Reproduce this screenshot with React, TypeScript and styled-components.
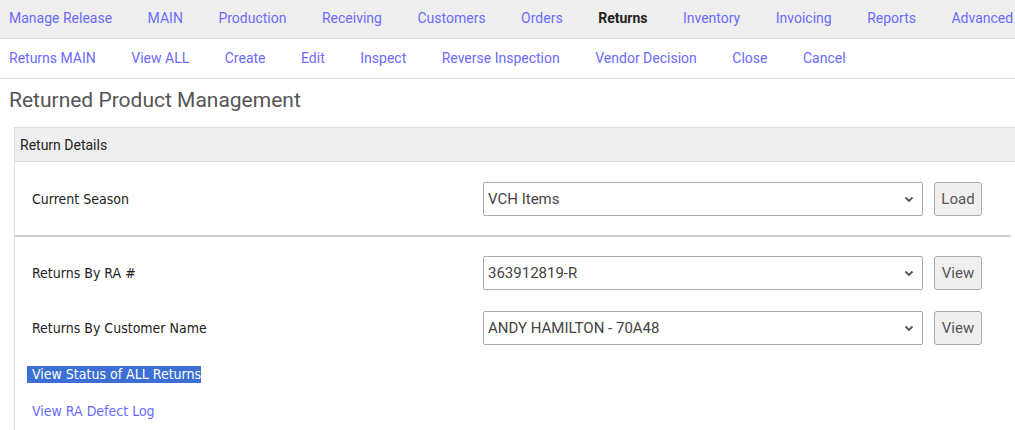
import React from "react";
import styled, { createGlobalStyle } from "styled-components";

const Global = createGlobalStyle`
  html, body { margin: 0; padding: 0; background: #fff; }
  body { font-family: Roboto, "Liberation Sans", sans-serif; overflow: hidden; }
`;

const Page = styled.div`
  width: 1015px;
  height: 430px;
  overflow: hidden;
`;

const NavBar = styled.nav<{ $bg: string; $height: number; $lift: number }>`
  display: flex;
  align-items: center;
  gap: 35.5px;
  height: ${(p) => p.$height}px;
  box-sizing: border-box;
  padding-left: 9px;
  padding-bottom: ${(p) => p.$lift}px;
  background: ${(p) => p.$bg};
  border-bottom: 1px solid #dcdcdc;
  white-space: nowrap;
  overflow: hidden;
`;

const NavLink = styled.a<{ $active?: boolean }>`
  font-size: 14px;
  color: ${(p) => (p.$active ? "#222" : "#6b6bff")};
  font-weight: ${(p) => (p.$active ? 700 : 400)};
  text-decoration: none;
  flex: none;
`;

const Title = styled.h1`
  margin: 0;
  padding: 8px 9px 0;
  height: 40px;
  font-size: 21px;
  font-weight: 400;
  color: #555;
  line-height: 26px;
`;

const Panel = styled.section`
  margin-left: 14px;
  border: 1px solid #dcdcdc;
  border-right: none;
`;

const PanelHeader = styled.div`
  height: 33px;
  line-height: 35px;
  padding-left: 5px;
  background: #efefef;
  border-bottom: 1px solid #dcdcdc;
  font-size: 14px;
  color: #222;
`;

const PanelBody = styled.div`
  padding: 20px 0 40px 17px;
`;

const FormRow = styled.div`
  display: grid;
  grid-template-columns: 440px 440px 48px;
  column-gap: 11px;
  align-items: center;
  height: 34px;
  margin-bottom: 21px;
`;

const Label = styled.span`
  font-family: "DejaVu Sans Condensed", "DejaVu Sans", Tahoma, sans-serif;
  font-stretch: condensed;
  font-size: 14px;
  color: #222;
`;

const SelectBox = styled.div`
  position: relative;
  height: 34px;
  box-sizing: border-box;
  border: 1px solid #aaa;
  border-radius: 2px;
  display: flex;
  align-items: center;
  padding-left: 4px;
  font-size: 15px;
  color: #444;
`;

const Chevron = styled.svg`
  position: absolute;
  right: 8px;
  top: 13px;
`;

const Button = styled.button`
  height: 34px;
  box-sizing: border-box;
  border: 1px solid #aaa;
  border-radius: 3px;
  background: #efefef;
  font-family: Roboto, sans-serif;
  font-size: 15px;
  color: #555;
  padding: 0;
`;

const Divider = styled.hr`
  margin: -2px 0 19px -17px;
  width: 996px;
  border: none;
  border-top: 2px solid #cfcfcf;
`;

const Links = styled.div`
  display: flex;
  flex-direction: column;
  align-items: flex-start;
  gap: 20px;
  margin-left: -5px;
`;

const TextLink = styled.a<{ $selected?: boolean }>`
  font-family: "DejaVu Sans Condensed", "DejaVu Sans", Tahoma, sans-serif;
  font-stretch: condensed;
  font-size: 14px;
  line-height: 17px;
  padding: 0 0 0 5px;
  text-decoration: none;
  color: ${(p) => (p.$selected ? "#fff" : "#6b6bff")};
  background: ${(p) => (p.$selected ? "#3b6fd4" : "transparent")};
`;

const Select = ({ value }: { value: string }) => (
  <SelectBox>
    {value}
    <Chevron width="10" height="7" viewBox="0 0 10 7">
      <path d="M1.5 1.5 L5 5 L8.5 1.5" fill="none" stroke="#555" strokeWidth="1.8" />
    </Chevron>
  </SelectBox>
);

const top = ["Manage Release", "MAIN", "Production", "Receiving", "Customers", "Orders", "Returns", "Inventory", "Invoicing", "Reports", "Advanced"];
const sub = ["Returns MAIN", "View ALL", "Create", "Edit", "Inspect", "Reverse Inspection", "Vendor Decision", "Close", "Cancel"];

export default function App() {
  return (
    <Page>
      <Global />
      <NavBar $bg="#efefef" $height={39} $lift={2}>
        {top.map((t) => (
          <NavLink key={t} $active={t === "Returns"}>{t}</NavLink>
        ))}
      </NavBar>
      <NavBar $bg="#fff" $height={40} $lift={2}>
        {sub.map((t) => (
          <NavLink key={t}>{t}</NavLink>
        ))}
      </NavBar>
      <Title>Returned Product Management</Title>
      <Panel>
        <PanelHeader>Return Details</PanelHeader>
        <PanelBody>
          <FormRow>
            <Label>Current Season</Label>
            <Select value="VCH Items" />
            <Button>Load</Button>
          </FormRow>
          <Divider />
          <FormRow>
            <Label>Returns By RA #</Label>
            <Select value="363912819-R" />
            <Button>View</Button>
          </FormRow>
          <FormRow>
            <Label>Returns By Customer Name</Label>
            <Select value="ANDY HAMILTON - 70A48" />
            <Button>View</Button>
          </FormRow>
          <Links>
            <TextLink $selected>View Status of ALL Returns</TextLink>
            <TextLink>View RA Defect Log</TextLink>
          </Links>
        </PanelBody>
      </Panel>
    </Page>
  );
}
